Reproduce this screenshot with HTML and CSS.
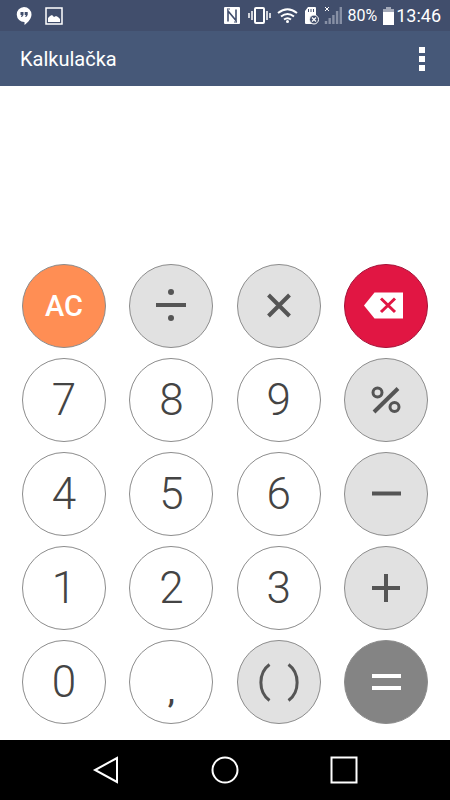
FILE: index.html
```html
<!DOCTYPE html>
<html lang="cs">
<head>
<meta charset="utf-8">
<meta name="viewport" content="width=device-width, initial-scale=1">
<title>Kalkulačka</title>
<link rel="stylesheet" href="styles.css">
</head>
<body>
<div class="status">
  <div class="status-left">
    <svg width="16" height="20" viewBox="0 0 16 20" aria-hidden="true"><path fill="#fff" d="M8 1a7.500 7.500 0 0 1 7.500 7.500C15.500 12.500 12 16.500 8.500 19v-3A7.500 7.500 0 1 1 8 1z"/><path fill="#414e6c" d="M4.500 6h3v3l-1.500 2H5l.7-2H4.500zM8.700 6h3v3l-1.500 2h-1l.7-2H8.700z"/></svg>
    <svg width="18" height="18" viewBox="0 0 18 18" aria-hidden="true"><rect x="1" y="1" width="16" height="16" fill="none" stroke="#fff" stroke-width="1.500"/><path fill="#fff" d="M3 15v-4l2-2 2-1 2 2 2-1 2 1 2 2v3z"/></svg>
  </div>
  <div class="status-right">
    <svg width="118" height="20" viewBox="0 0 118 20" aria-hidden="true">
      <rect x="0" y="1" width="16" height="17" rx="1" fill="#fff"/>
      <path d="M4 15.500V5l8 9.500V3.500" fill="none" stroke="#414e6c" stroke-width="1.600"/>
      <path d="M3 3l3 0M10 16h3" stroke="#414e6c"/>
      <rect x="31" y="2" width="9" height="15" rx="1" fill="none" stroke="#fff" stroke-width="2"/>
      <path d="M28 5v9M25 7v5M43 5v9M46 7v5" stroke="#fff" stroke-width="1.500"/>
      <g fill="none" stroke="#fff" stroke-width="2"><path d="M54 7q9.500-7.500 19 0M57 10.500q6.500-5 13 0M60 13.500q3.500-2.600 7 0"/></g><circle cx="63.500" cy="15.500" r="1.500" fill="#fff"/>
      <path fill="#fff" d="M81 17V5l3-4h7q1 0 1 1v15q0 1-1 1h-9q-1 0-1-1z"/>
      <path d="M84.500 3v3M87 3v3M89.500 3v3" stroke="#414e6c"/>
      <circle cx="90" cy="13.500" r="4.500" fill="#414e6c" stroke="#fff"/><path d="M88 11.500l4 4m0-4l-4 4" stroke="#fff" stroke-width="1.200"/>
      <path d="M101 1l4 4m0-4l-4 4" stroke="#fff"/>
      <path d="M102 18v-3M105.700 18v-6M109.400 18V9M113.100 18V5M116.800 18V1" stroke="#8790a5" stroke-width="2.400"/>
    </svg>
    <span class="percent">80%</span>
    <svg width="11" height="18" viewBox="0 0 11 18" aria-hidden="true"><path fill="#a3a9b8" d="M3 0h5v2h3v4H0V2h3z"/><path fill="#fff" d="M0 5h11v13H0z"/></svg>
    <span class="time">13:46</span>
  </div>
</div>
<header class="header">
  <h1 class="title">Kalkulačka</h1>
  <button class="menu" aria-label="Další možnosti"><svg width="6" height="24" viewBox="0 0 6 24"><path fill="#fff" d="M0 0h6v6H0zM0 9h6v6H0zM0 18h6v6H0z"/></svg></button>
</header>
<main class="calculator">
  <output class="display" aria-label="Výsledek"></output>
  <div class="keys">
    <button class="key clear">AC</button>
    <button class="key operator" aria-label="Děleno"><svg class="icon" viewBox="0 0 44 44"><path d="M7 21h30"/><g fill="currentColor" stroke="none"><circle cx="22" cy="8" r="3"/><circle cx="22" cy="34" r="3"/></g></svg></button>
    <button class="key operator" aria-label="Krát"><svg class="icon" viewBox="0 0 44 44"><path d="M11.500 11l21 21M32.500 11l-21 21"/></svg></button>
    <button class="key delete" aria-label="Smazat"><svg class="icon" viewBox="0 0 44 44"><path fill="#fff" stroke="none" d="M0 21.500l10.500-13H39v26H10.500z"/><path class="cross" d="M17 14.500l14 13.500m0-13.500l-14 13.500"/></svg></button>
    <button class="key">7</button>
    <button class="key">8</button>
    <button class="key">9</button>
    <button class="key operator" aria-label="Procenta"><svg class="icon" viewBox="0 0 44 44"><path d="M10 34L34 10.500"/><g stroke-width="3"><circle cx="13.500" cy="14.500" r="4.500"/><circle cx="30.500" cy="29" r="4.500"/></g></svg></button>
    <button class="key">4</button>
    <button class="key">5</button>
    <button class="key">6</button>
    <button class="key operator" aria-label="Minus"><svg class="icon" viewBox="0 0 44 44"><path d="M8 21.500h29"/></svg></button>
    <button class="key">1</button>
    <button class="key">2</button>
    <button class="key">3</button>
    <button class="key operator" aria-label="Plus"><svg class="icon" viewBox="0 0 44 44"><path d="M8 22h28M22 8v28"/></svg></button>
    <button class="key">0</button>
    <button class="key comma">,</button>
    <button class="key operator" aria-label="Závorky"><svg class="icon" viewBox="0 0 44 44"><path stroke-width="3" d="M12.500 4.500C1 13 1 32 12.500 40.500M31.500 4.500C43 13 43 32 31.500 40.500"/></svg></button>
    <button class="key equals" aria-label="Rovná se"><svg class="icon" viewBox="0 0 44 44"><path d="M8 16h29M8 28h29"/></svg></button>
  </div>
</main>
<nav class="navbar">
  <button class="nav-button" aria-label="Zpět"><svg width="28" height="28" viewBox="0 0 28 28"><path d="M25 2v24L3 14z"/></svg></button>
  <button class="nav-button" aria-label="Domů"><svg width="28" height="28" viewBox="0 0 28 28"><circle cx="14" cy="14" r="12.500"/></svg></button>
  <button class="nav-button" aria-label="Přehled"><svg width="28" height="28" viewBox="0 0 28 28"><path d="M1.500 1.500h25v25h-25z"/></svg></button>
</nav>
</body>
</html>
```
FILE: styles.css
```css
* {
  box-sizing: border-box;
}

body {
  display: flex;
  flex-direction: column;
  min-height: 100vh;
  margin: 0;
  background: #fff;
  color: #444;
  font-family: Roboto, sans-serif;
}

button {
  margin: 0;
  padding: 0;
  border: 0;
  background: none;
  color: inherit;
  font: inherit;
}

svg {
  display: block;
  flex: none;
}

.status {
  display: flex;
  justify-content: space-between;
  align-items: center;
  height: 31px;
  padding: 0 9px 0 16px;
  background: #414e6c;
  color: #fff;
}

.status-left {
  display: flex;
  align-items: center;
  gap: 13px;
}

.status-right {
  display: flex;
  align-items: center;
}

.percent {
  margin: 0 6px 0 5px;
  font-size: 16px;
}

.time {
  margin-left: 2px;
  font-size: 18px;
}

.header {
  display: flex;
  justify-content: space-between;
  align-items: center;
  height: 55px;
  padding: 0 17px 0 20px;
  background: #465878;
  color: #fff;
}

.title {
  margin: 0;
  font-size: 20px;
  font-weight: 400;
}

.menu {
  padding: 8px;
}

.calculator {
  display: flex;
  flex: 1;
  flex-direction: column;
  padding: 0 22px 16px;
}

.display {
  flex: 1;
}

.keys {
  display: grid;
  grid-template-columns: repeat(4, 84px);
  grid-auto-rows: 84px;
  justify-content: space-between;
  row-gap: 10px;
}

.key {
  display: flex;
  justify-content: center;
  align-items: center;
  border: 1px solid #8c8c8c;
  border-radius: 50%;
  font-size: 44px;
  font-weight: 300;
}

.clear {
  background: #ff8e54;
  color: #fff;
  font-size: 29px;
  font-weight: 500;
}

.operator {
  background: #e1e1e1;
  color: #555;
}

.delete {
  border-color: #a51238;
  background: #e11643;
}

.equals {
  background: #848484;
  color: #fff;
}

.comma {
  padding-top: 20px;
  font-size: 32px;
  font-weight: 500;
}

.icon {
  width: 44px;
  height: 44px;
  fill: none;
  stroke: currentColor;
  stroke-width: 4;
}

.cross {
  stroke: #e11643;
  stroke-width: 3;
}

.navbar {
  display: flex;
  justify-content: center;
  align-items: center;
  gap: 91px;
  height: 60px;
  background: #000;
}

.nav-button svg {
  fill: none;
  stroke: #fff;
  stroke-width: 2;
}
```
